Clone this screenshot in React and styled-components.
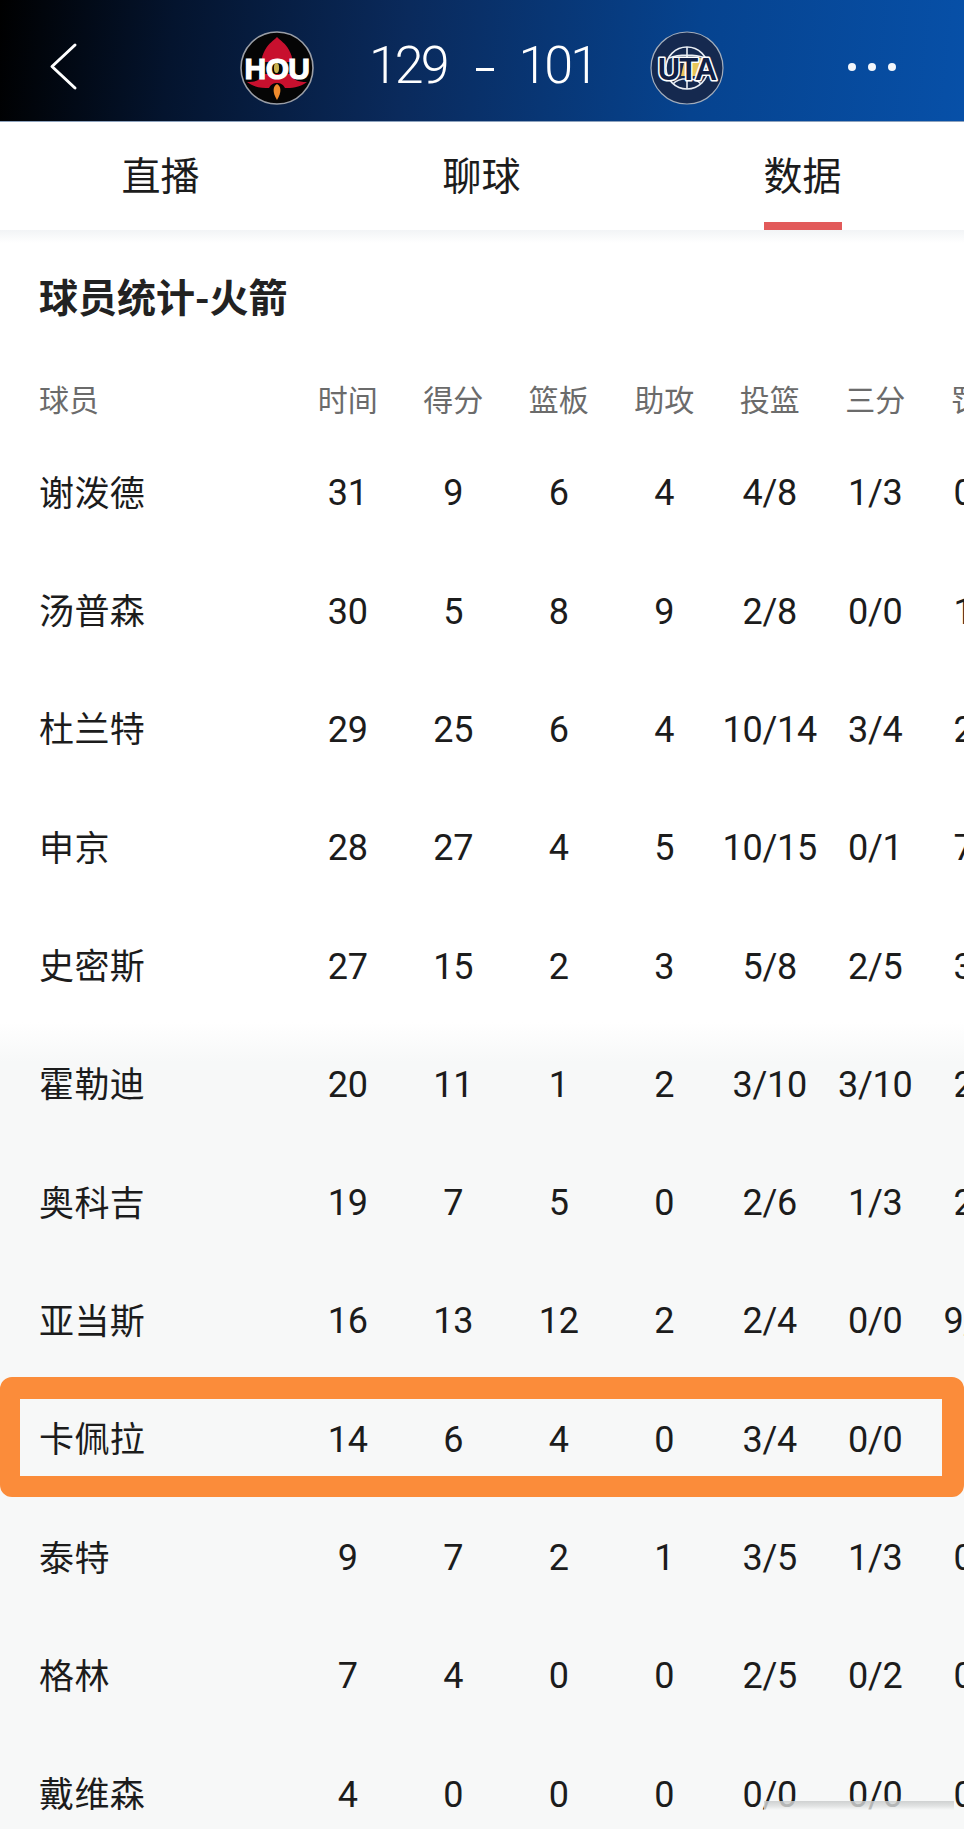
import React from 'react';
import styled, { createGlobalStyle } from 'styled-components';

const CJK = '"Noto Sans CJK SC", "Noto Sans", sans-serif';
const NUM = 'Roboto, "Noto Sans", sans-serif';

const GlobalStyle = createGlobalStyle`
  html, body {
    margin: 0;
    padding: 0;
    background: #fff;
  }
`;

const Page = styled.div`
  position: relative;
  width: 964px;
  height: 1829px;
  overflow: hidden;
  font-family: ${CJK};
  color: #1c1c1c;
  background: linear-gradient(#fff 1022px, #f7f8f8 1062px);
`;

const TopBar = styled.header`
  height: 122px;
  display: grid;
  grid-template-columns: 239px 76px 334px 76px 123px 116px;
  align-items: center;
  background: linear-gradient(96deg, #000 0%, #04142e 18%, #0a2a5c 42%, #06438f 72%, #0750a8 100%);
  border-bottom: 1px solid #8da2bd;
  box-sizing: border-box;
`;

const BackButton = styled.svg`
  width: 40px;
  height: 56px;
  margin: 10px 0 0 42px;
`;

const Logo = styled.svg`
  width: 76px;
  height: 76px;
  margin-top: 14px;
`;

const Score = styled.div`
  display: flex;
  justify-content: space-between;
  align-items: center;
  margin-top: 10px;
  padding: 0 53px 0 54px;
  font-family: ${NUM};
  font-weight: 300;
  font-size: 52px;
  letter-spacing: -3px;
  color: #fff;
`;

const ScoreDash = styled.span`
  display: block;
  width: 18px;
  height: 3px;
  background: #fff;
  margin: 8px 0 0 4px;
`;

const MoreDots = styled.div`
  display: flex;
  gap: 12px;
  margin-top: 12px;
  grid-column: 6;
`;

const Dot = styled.span`
  width: 8px;
  height: 8px;
  border-radius: 50%;
  background: #f2f6fb;
`;

const Tabs = styled.nav`
  height: 108px;
  display: grid;
  grid-template-columns: repeat(3, 321px);
  background: #fff;
`;

const Tab = styled.div`
  position: relative;
  text-align: center;
  font-size: 39px;
  line-height: 102px;
  font-weight: 400;
  color: #1c1c1c;

  ${p =>
    p.$active &&
    `
    &::after {
      content: '';
      position: absolute;
      left: 122px;
      bottom: 0;
      width: 78px;
      height: 8px;
      background: #e25a5a;
    }
  `}
`;

const TabShadow = styled.div`
  height: 13px;
  background: linear-gradient(#f2f4f6, #fff);
`;

const Title = styled.h2`
  margin: 0;
  height: 108px;
  padding-left: 39px;
  font-size: 39px;
  font-weight: 700;
  line-height: 104px;
  color: #222;
`;

const Row = styled.div`
  position: relative;
  display: grid;
  grid-template-columns: 256px repeat(7, 105.5px);
  align-items: center;
  height: ${p => (p.$head ? '70.2px' : '118.3px')};
  padding: ${p => (p.$head ? '12px' : '0')} 0 0 39px;
  white-space: nowrap;
  color: ${p => (p.$head ? '#6b6b6b' : '#1c1c1c')};

  ${p =>
    p.$marked &&
    `
    &::after {
      content: '';
      position: absolute;
      left: 0;
      right: 0;
      top: -3px;
      height: 120px;
      box-sizing: border-box;
      border: solid #fb8c3a;
      border-width: 22px 22px 21px 20px;
      border-radius: 12px;
    }
  `}
`;

const Name = styled.div`
  font-size: 35px;
  letter-spacing: 0.4px;
  margin-bottom: 4px;
`;

const HeadName = styled.div`
  font-size: 30px;
`;

const HeadCell = styled.div`
  font-size: 30px;
  text-align: center;
`;

const Value = styled.div`
  font-family: ${NUM};
  font-size: 36px;
  font-weight: 400;
  letter-spacing: -0.3px;
  text-align: center;
  margin-top: 2px;
`;

const WatermarkSmear = styled.div`
  position: absolute;
  left: 764px;
  right: 10px;
  top: 1801px;
  bottom: 0;
  background: linear-gradient(#c9cbcbdd 0, #dcdedecc 5px, #f7f8f8bb 9px, #f7f8f8aa 100%);
`;

const columns = ['时间', '得分', '篮板', '助攻', '投篮', '三分', '罚球'];

const players = [
  ['谢泼德', '31', '9', '6', '4', '4/8', '1/3', '0/0'],
  ['汤普森', '30', '5', '8', '9', '2/8', '0/0', '1/2'],
  ['杜兰特', '29', '25', '6', '4', '10/14', '3/4', '2/2'],
  ['申京', '28', '27', '4', '5', '10/15', '0/1', '7/7'],
  ['史密斯', '27', '15', '2', '3', '5/8', '2/5', '3/4'],
  ['霍勒迪', '20', '11', '1', '2', '3/10', '3/10', '2/2'],
  ['奥科吉', '19', '7', '5', '0', '2/6', '1/3', '2/2'],
  ['亚当斯', '16', '13', '12', '2', '2/4', '0/0', '9/10'],
  ['卡佩拉', '14', '6', '4', '0', '3/4', '0/0', '0/0'],
  ['泰特', '9', '7', '2', '1', '3/5', '1/3', '0/0'],
  ['格林', '7', '4', '0', '0', '2/5', '0/2', '0/0'],
  ['戴维森', '4', '0', '0', '0', '0/0', '0/0', '0/0'],
];

const HouLogo = () => (
  <Logo viewBox="0 0 76 76">
    <circle cx="38" cy="38" r="36" fill="#050505" stroke="#9a9ea6" strokeWidth="1.6" />
    <path d="M38 7 C42 11 46 13 50 20 C52 24 54 28 53 32 L23 32 C22 28 24 24 26 20 C30 13 34 11 38 7 Z" fill="#c8102e" />
    <path d="M22 44 L54 44 C54 50 58 52 68 52 C60 58 52 58 46 58 C44 54 41 53 38 53 C35 53 32 54 30 58 C24 58 16 58 8 52 C18 52 22 50 22 44 Z" fill="#c8102e" />
    <path d="M38 54 C42 56 43 62 38 70 C33 62 34 56 38 54 Z" fill="#ef8a2c" />
    <text x="38" y="48.5" textAnchor="middle" fontFamily="Liberation Sans, sans-serif" fontWeight="700" fontSize="30" letterSpacing="-0.6" fill="#fff" stroke="#fff" strokeWidth="1.2">HOU</text>
    <ellipse cx="37.5" cy="38" rx="2.6" ry="5" fill="#c9b04c" />
  </Logo>
);

const UtaLogo = () => (
  <Logo viewBox="0 0 76 76">
    <circle cx="38" cy="38" r="36" fill="#15294f" stroke="#a3adbb" strokeWidth="1.2" />
    <path d="M36 28 L56 28 L52 46 L32 46 Z" fill="#e8c65a" />
    <g fill="none" stroke="#e8edf3" strokeWidth="1.6">
      <circle cx="38" cy="38" r="21" />
      <path d="M20 28 C30 24 46 24 56 28 M24 54 C30 47 46 47 52 54 M38 17 V59" />
    </g>
    <text x="38" y="50" textAnchor="middle" fontFamily="Liberation Sans, sans-serif" fontWeight="700" fontSize="31" letterSpacing="-1" fill="#101f45" stroke="#fff" strokeWidth="3.2" strokeLinejoin="round" paintOrder="stroke">UTA</text>
  </Logo>
);

const App = () => (
  <Page>
    <GlobalStyle />
    <TopBar>
      <BackButton viewBox="0 0 40 56" fill="none" stroke="#fff" strokeWidth="3" strokeLinecap="round" strokeLinejoin="round">
        <path d="M33 7 L10 28.5 L33 50" />
      </BackButton>
      <HouLogo />
      <Score>
        <span>129</span>
        <ScoreDash />
        <span>101</span>
      </Score>
      <UtaLogo />
      <MoreDots>
        <Dot />
        <Dot />
        <Dot />
      </MoreDots>
    </TopBar>
    <Tabs>
      <Tab>直播</Tab>
      <Tab>聊球</Tab>
      <Tab $active>数据</Tab>
    </Tabs>
    <TabShadow />
    <Title>球员统计-火箭</Title>
    <Row $head>
      <HeadName>球员</HeadName>
      {columns.map(c => (
        <HeadCell key={c}>{c}</HeadCell>
      ))}
    </Row>
    {players.map(([name, ...stats]) => (
      <Row key={name} $marked={name === '卡佩拉'}>
        <Name>{name}</Name>
        {stats.map((v, i) => (
          <Value key={i}>{v}</Value>
        ))}
      </Row>
    ))}
    <WatermarkSmear />
  </Page>
);

export default App;
